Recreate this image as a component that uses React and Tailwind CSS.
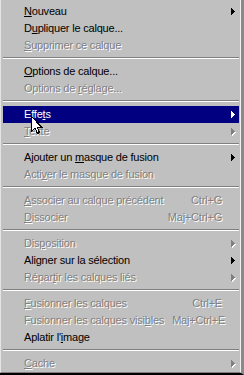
const items = [
  { label: "Nouveau", u: 0, arrow: true },
  { label: "Dupliquer le calque...", u: 1 },
  { label: "Supprimer ce calque", u: 0, disabled: true },
  "sep",
  { label: "Options de calque...", u: 0 },
  { label: "Options de réglage...", u: 11, disabled: true },
  "sep",
  { label: "Effets", u: 4, arrow: true, active: true },
  { label: "Texte", u: 0, arrow: true, disabled: true },
  "sep",
  { label: "Ajouter un masque de fusion", u: 11, arrow: true },
  { label: "Activer le masque de fusion", u: 4, disabled: true },
  "sep",
  { label: "Associer au calque précédent", u: 0, shortcut: "Ctrl+G", disabled: true },
  { label: "Dissocier", u: 0, shortcut: "Maj+Ctrl+G", disabled: true },
  "sep",
  { label: "Disposition", u: 3, arrow: true, disabled: true },
  { label: "Aligner sur la sélection", u: 3, arrow: true },
  { label: "Répartir les calques liés", u: 5, arrow: true, disabled: true },
  "sep",
  { label: "Fusionner les calques", u: 0, shortcut: "Ctrl+E", disabled: true },
  { label: "Fusionner les calques visibles", u: 26, shortcut: "Maj+Ctrl+E", disabled: true },
  { label: "Aplatir l'image", u: 10 },
  "sep",
  { label: "Cache", u: 0, arrow: true, disabled: true },
];

function Arrow({ color }) {
  return (
    <svg width="4" height="7" viewBox="0 0 4 7" shapeRendering="crispEdges">
      <rect x="0" y="0" width="1" height="7" fill={color} />
      <rect x="1" y="1" width="1" height="5" fill={color} />
      <rect x="2" y="2" width="1" height="3" fill={color} />
      <rect x="3" y="3" width="1" height="1" fill={color} />
    </svg>
  );
}

function Label({ text, u }) {
  return (
    <span>
      {text.slice(0, u)}
      <span className="underline underline-offset-[1px]">{text[u]}</span>
      {text.slice(u + 1)}
    </span>
  );
}

function Row({ item }) {
  let look = "text-black";
  if (item.active) look = "bg-[#000080] text-white";
  if (item.disabled) look = "text-[#808080] [text-shadow:1px_1px_0_#ffffff]";
  return (
    <div className={`h-[17px] flex items-center pl-[21px] ${look}`}>
      <span className="flex-1 whitespace-nowrap">
        <Label text={item.label} u={item.u} />
      </span>
      {item.shortcut && <span className="whitespace-nowrap ml-2">{item.shortcut}</span>}
      <span className="w-[17px] h-full flex items-center pl-[9px]">
        {item.arrow &&
          (item.disabled ? (
            <span className="relative w-[5px] h-[8px]">
              <span className="absolute left-[1px] top-[1px] flex">
                <Arrow color="#ffffff" />
              </span>
              <span className="absolute left-0 top-0 flex">
                <Arrow color="#808080" />
              </span>
            </span>
          ) : (
            <Arrow color={item.active ? "#ffffff" : "#000000"} />
          ))}
      </span>
    </div>
  );
}

export default function App() {
  return (
    <div className="relative w-[244px] h-[375px] border-b-2 border-b-black border-r-[3px] border-r-[#8a8a8a] font-['Liberation_Sans',Arial,sans-serif] text-[11px] leading-none tracking-[-0.2px]">
      <div className="h-full bg-[#c0c0c0] border-l border-l-[#e4e4e4] border-r border-r-[#f0f0f0] border-b border-b-[#808080] pt-[3px] pl-[2px] pr-[1px]">
        {items.map((item, i) =>
          item === "sep" ? (
            <div key={i} className="h-[9px] pt-[3px]">
              <div className="h-[1px] bg-[#808080]" />
              <div className="h-[1px] bg-white" />
            </div>
          ) : (
            <Row key={i} item={item} />
          )
        )}
      </div>
      {/* mouse pointer over Effets */}
      <svg className="absolute left-[31px] top-[116px]" width="12" height="19" viewBox="0 0 12 19" shapeRendering="crispEdges">
        <path d="M0.5 0.5 L0.5 15.5 L4 12 L6.5 17.5 L8.5 16.5 L6 11 L10.5 11 Z" fill="#ffffff" stroke="#000000" strokeWidth="1" />
      </svg>
    </div>
  );
}
